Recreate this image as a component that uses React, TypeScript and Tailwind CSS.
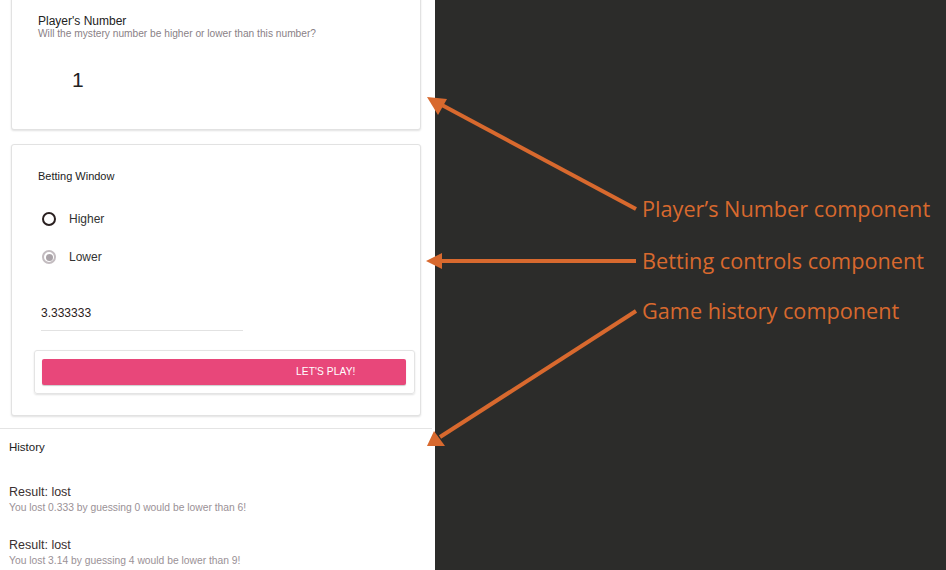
import React from "react";

export default function App() {
  return (
    <div className="relative w-[946px] h-[570px] overflow-hidden bg-[#2c2c2a] flex" style={{ fontFamily: '"Liberation Sans", Arial, sans-serif' }}>
      <div className="w-[435px] h-full bg-white flex flex-col">
        {/* Player's number card */}
        <div className="ml-[11px] w-[410px] h-[139px] mt-[-9px] shrink-0 bg-white border border-[#e2e2e2] rounded-[3px] shadow-[0_1px_2px_rgba(0,0,0,0.12)] pl-[26px] pt-[22px]">
          <div className="text-[12px] leading-[14px] text-[#222]">Player's Number</div>
          <div className="text-[10.2px] leading-[12px] text-[#8a7f86]">Will the mystery number be higher or lower than this number?</div>
          <div className="mt-[28px] ml-[34px] text-[21px] leading-[24px] text-[#222]">1</div>
        </div>

        {/* Betting card */}
        <div className="ml-[11px] mt-[14px] w-[410px] h-[272px] shrink-0 bg-white border border-[#e2e2e2] rounded-[3px] shadow-[0_1px_2px_rgba(0,0,0,0.12)] flex flex-col">
          <div className="pl-[26px] pt-[24px] text-[11px] leading-[14px] text-[#222]">Betting Window</div>
          <div className="pl-[30px] mt-[26px] flex items-center h-[20px]">
            <span className="w-[14px] h-[14px] rounded-full border-[2px] border-[#2a2020] box-border" />
            <span className="ml-[13px] text-[12px] text-[#333]">Higher</span>
          </div>
          <div className="pl-[30px] mt-[18px] flex items-center h-[20px]">
            <span className="w-[14px] h-[14px] rounded-full border-[2px] border-[#c3bcc0] box-border flex items-center justify-center">
              <span className="w-[7px] h-[7px] rounded-full bg-[#aaa3a8]" />
            </span>
            <span className="ml-[13px] text-[12px] text-[#333]">Lower</span>
          </div>
          <div className="ml-[29px] mt-[39px] w-[202px] h-[25px] text-[12px] leading-[14px] text-[#2a2020] border-b border-[#e2e2e2]">3.333333</div>
          <div className="ml-[22px] mt-[19px] w-[381px] h-[44px] border border-[#e4e4e4] rounded-[3px] shadow-[0_1px_2px_rgba(0,0,0,0.12)] pl-[7px] pr-[8px] pt-[8px]">
            <div className="h-[26px] bg-[#e8477a] rounded-[2px] shadow-[0_1px_1px_rgba(0,0,0,0.2)] flex items-center pl-[254px] text-[10.2px] text-white tracking-[0.1px]">
              LET'S PLAY!
            </div>
          </div>
        </div>

        {/* History */}
        <div className="mt-[12px] w-[432px] border-t border-[#e4e4e4] pl-[9px] pt-[11px]">
          <div className="text-[11.5px] leading-[14px] text-[#222]">History</div>
          <div className="mt-[31px] text-[12.5px] leading-[15px] text-[#3a3030]">Result: lost</div>
          <div className="mt-[1px] text-[10.3px] leading-[13px] text-[#9a9196]">You lost 0.333 by guessing 0 would be lower than 6!</div>
          <div className="mt-[24px] text-[12.5px] leading-[15px] text-[#3a3030]">Result: lost</div>
          <div className="mt-[1px] text-[10.3px] leading-[13px] text-[#9a9196]">You lost 3.14 by guessing 4 would be lower than 9!</div>
        </div>
      </div>

      {/* Annotation arrows */}
      <svg className="absolute left-0 top-0" width="946" height="570" viewBox="0 0 946 570">
        <line x1="636" y1="209" x2="440" y2="104" stroke="#d8692e" strokeWidth="4" />
        <polygon points="427,97 447,99 438,115" fill="#d8692e" />
        <line x1="636" y1="261" x2="440" y2="261" stroke="#d8692e" strokeWidth="4" />
        <polygon points="426,261 442,253 442,269" fill="#d8692e" />
        <line x1="636" y1="311" x2="440" y2="437" stroke="#d8692e" strokeWidth="4" />
        <polygon points="427,446 434,431 445,446" fill="#d8692e" />
      </svg>

      <div className="absolute left-[642px] top-[196px] text-[21.7px] leading-[26px] text-[#d8692e]" style={{ fontFamily: '"Open Sans", "Noto Sans", sans-serif' }}>
        Player’s Number component
      </div>
      <div className="absolute left-[642px] top-[248px] text-[21.7px] leading-[26px] text-[#d8692e]" style={{ fontFamily: '"Open Sans", "Noto Sans", sans-serif' }}>
        Betting controls component
      </div>
      <div className="absolute left-[642px] top-[298px] text-[21.7px] leading-[26px] text-[#d8692e]" style={{ fontFamily: '"Open Sans", "Noto Sans", sans-serif' }}>
        Game history component
      </div>
    </div>
  );
}
